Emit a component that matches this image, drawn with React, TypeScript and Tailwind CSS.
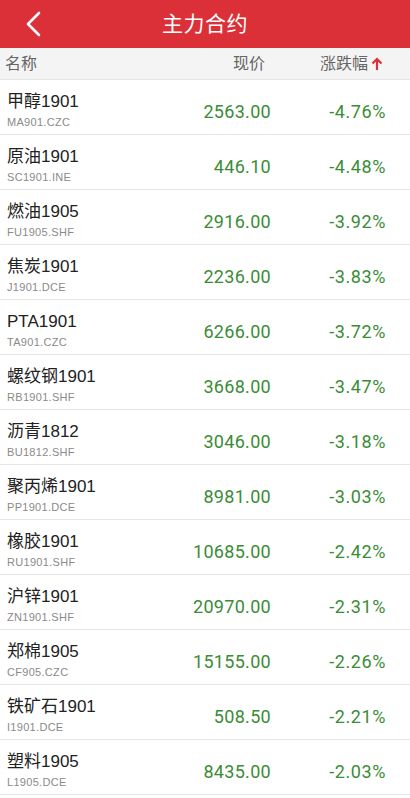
const rows = [
  { name: "甲醇1901", code: "MA901.CZC", price: "2563.00", pct: "-4.76%" },
  { name: "原油1901", code: "SC1901.INE", price: "446.10", pct: "-4.48%" },
  { name: "燃油1905", code: "FU1905.SHF", price: "2916.00", pct: "-3.92%" },
  { name: "焦炭1901", code: "J1901.DCE", price: "2236.00", pct: "-3.83%" },
  { name: "PTA1901", code: "TA901.CZC", price: "6266.00", pct: "-3.72%" },
  { name: "螺纹钢1901", code: "RB1901.SHF", price: "3668.00", pct: "-3.47%" },
  { name: "沥青1812", code: "BU1812.SHF", price: "3046.00", pct: "-3.18%" },
  { name: "聚丙烯1901", code: "PP1901.DCE", price: "8981.00", pct: "-3.03%" },
  { name: "橡胶1901", code: "RU1901.SHF", price: "10685.00", pct: "-2.42%" },
  { name: "沪锌1901", code: "ZN1901.SHF", price: "20970.00", pct: "-2.31%" },
  { name: "郑棉1905", code: "CF905.CZC", price: "15155.00", pct: "-2.26%" },
  { name: "铁矿石1901", code: "I1901.DCE", price: "508.50", pct: "-2.21%" },
  { name: "塑料1905", code: "L1905.DCE", price: "8435.00", pct: "-2.03%" },
];

const cjk = "font-['Liberation_Sans','Noto_Sans_CJK_SC',sans-serif]";
const num = "font-['Roboto','Noto_Sans_CJK_SC',sans-serif]";

const App = () => {
  return (
    <main className={`w-[410px] h-[798px] bg-white overflow-hidden ${cjk}`}>
      {/* top bar */}
      <header className="h-[48px] bg-[#dc3039] flex items-center relative">
        <svg
          width="20"
          height="28"
          viewBox="0 0 20 28"
          className="ml-[24px]"
        >
          <polyline
            points="15,3 4,14 15,25"
            fill="none"
            stroke="#fff"
            strokeWidth="2.6"
            strokeLinecap="round"
            strokeLinejoin="round"
          />
        </svg>
        <h1 className="absolute left-0 right-0 text-center text-white text-[21px] tracking-[0.5px] pointer-events-none">
          主力合约
        </h1>
      </header>

      {/* column titles */}
      <div className="h-[32px] bg-[#f4f4f4] border-b border-[#e6e6e6] grid grid-cols-[1fr_110px_115px] items-center pr-[27px] text-[16px] text-[#666]">
        <span className="pl-[5px]">名称</span>
        <span className="text-right pr-[3px]">现价</span>
        <span className="text-right flex items-center justify-end">
          涨跌幅
          <svg width="12" height="14" viewBox="0 0 12 14" className="ml-[3px]">
            <path
              d="M6 13V2M1.5 6.5L6 2l4.5 4.5"
              fill="none"
              stroke="#dc3039"
              strokeWidth="2.2"
            />
          </svg>
        </span>
      </div>

      {/* list */}
      {rows.map((r) => (
        <div
          key={r.code}
          className="h-[55px] border-b border-[#e6e6e6] grid grid-cols-[1fr_110px_115px] items-center pr-[24px]"
        >
          <div className="pl-[7px] pt-[7px] flex flex-col">
            <span className="text-[17px] leading-[20px] text-[#222]">
              {r.name}
            </span>
            <span className="text-[11px] leading-[14px] mt-[3px] text-[#8a8a8a] tracking-[0.3px]">
              {r.code}
            </span>
          </div>
          <span
            className={`text-right text-[18px] text-[#3b8c36] pt-[8px] tracking-[0.3px] ${num}`}
          >
            {r.price}
          </span>
          <span
            className={`text-right text-[18px] text-[#3b8c36] pt-[8px] tracking-[0.6px] ${num}`}
          >
            {r.pct}
          </span>
        </div>
      ))}
    </main>
  );
};

export default App;
